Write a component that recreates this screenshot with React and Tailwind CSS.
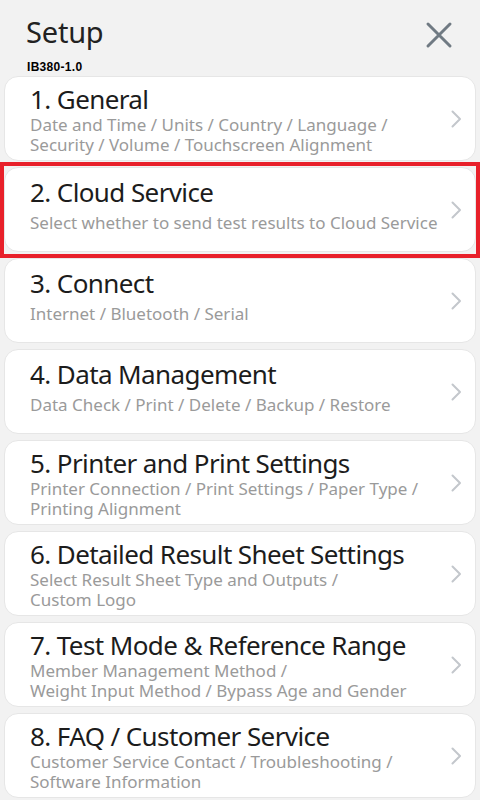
import React from 'react';

const items = [
  { title: '1. General', sub: ['Date and Time / Units / Country / Language /', 'Security / Volume / Touchscreen Alignment'] },
  { title: '2. Cloud Service', sub: ['Select whether to send test results to Cloud Service'], marked: true },
  { title: '3. Connect', sub: ['Internet / Bluetooth / Serial'] },
  { title: '4. Data Management', sub: ['Data Check / Print / Delete / Backup / Restore'] },
  { title: '5. Printer and Print Settings', sub: ['Printer Connection / Print Settings / Paper Type /', 'Printing Alignment'] },
  { title: '6. Detailed Result Sheet Settings', sub: ['Select Result Sheet Type and Outputs /', 'Custom Logo'] },
  { title: '7. Test Mode & Reference Range', sub: ['Member Management Method /', 'Weight Input Method / Bypass Age and Gender'] },
  { title: '8. FAQ / Customer Service', sub: ['Customer Service Contact / Troubleshooting /', 'Software Information'] },
];

const Chevron = () => (
  <svg width="12" height="20" viewBox="0 0 12 20" fill="none" stroke="#c3c7cc" strokeWidth="2" strokeLinecap="round" strokeLinejoin="round">
    <path d="M2.5 2.5l7.5 7.5-7.5 7.5" />
  </svg>
);

const Card = ({ title, sub, marked }) => {
  const single = sub.length === 1;
  return (
    <div className="relative">
      <div className="h-[85px] bg-white rounded-[14px] border border-[#e6e6e6] flex items-center pl-[25px] pr-[13px]">
        <div className={single ? 'flex-1 self-start pt-[8px]' : 'flex-1 self-start pt-[6px]'}>
          <div className="text-[26px] leading-[32px] text-[#1c1c1c] tracking-[-0.6px]">{title}</div>
          <div className={single ? 'mt-[5px]' : ''}>
            {sub.map((s, i) => (
              <div key={i} className="text-[17px] leading-[20px] text-[#9a9a9a] whitespace-nowrap">{s}</div>
            ))}
          </div>
        </div>
        <Chevron />
      </div>
      {marked && (
        <div className="absolute top-[-5px] bottom-[-6px] left-[-4px] right-[-4px] border-4 border-[#e8202a] pointer-events-none" />
      )}
    </div>
  );
};

export default function App() {
  return (
    <div className="w-[480px] h-[800px] bg-[#f2f2f2] overflow-hidden font-['Noto_Sans',sans-serif]">
      <div className="flex items-start justify-between pl-[26px] pr-[26px] pt-[12px]">
        <div>
          <div className="text-[29px] leading-[40px] text-[#222] tracking-[-0.2px]">Setup</div>
          <div className="mt-[8px] font-['Liberation_Sans',sans-serif] font-bold text-[12px] leading-[14px] text-black tracking-[0.3px] ml-[1px]">IB380-1.0</div>
        </div>
        <svg className="mt-[8px]" width="30" height="30" viewBox="0 0 30 30" fill="none" stroke="#707a83" strokeWidth="3" strokeLinecap="round">
          <path d="M4 4l22 22M26 4L4 26" />
        </svg>
      </div>
      <div className="flex flex-col gap-[6px] px-[4px] mt-[2px]">
        {items.map((it) => (
          <Card key={it.title} {...it} />
        ))}
      </div>
    </div>
  );
}
